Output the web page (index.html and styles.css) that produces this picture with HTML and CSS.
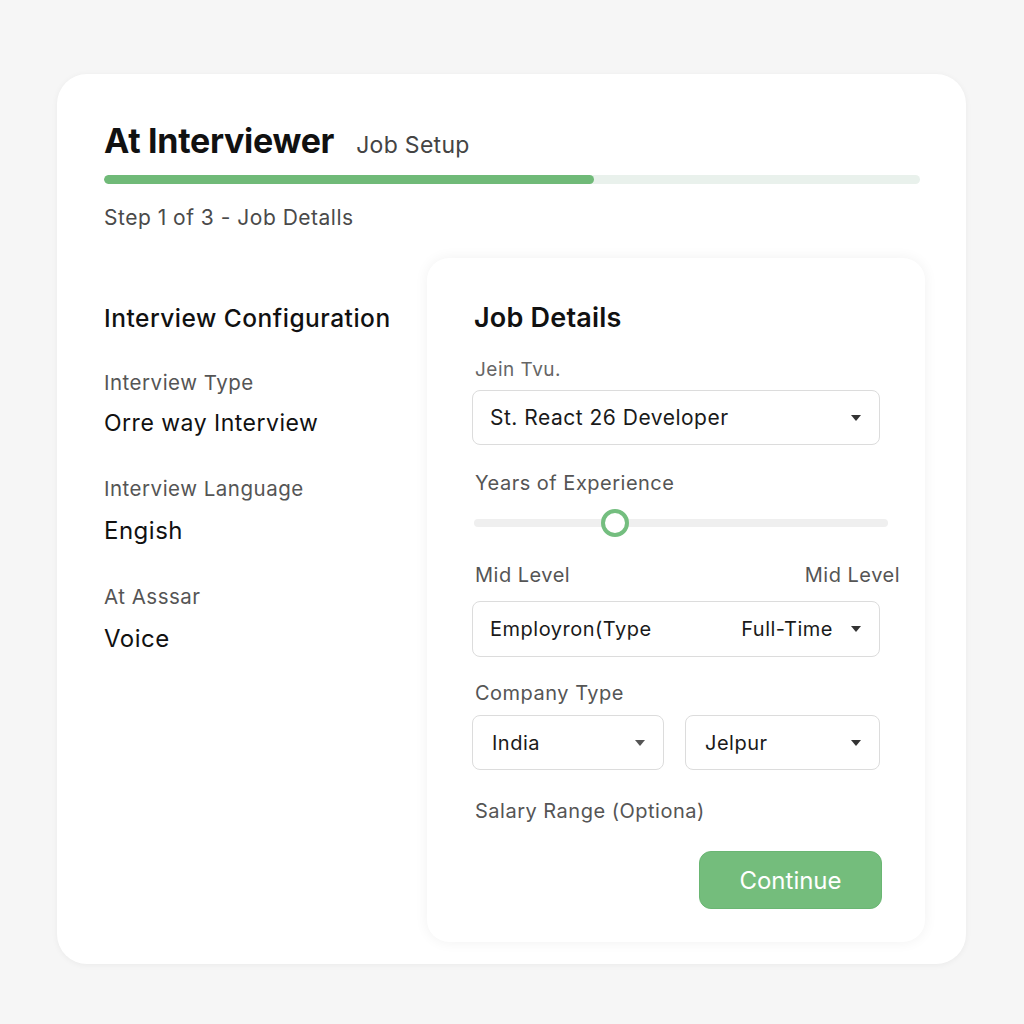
FILE: index.html
```html
<!DOCTYPE html>
<html lang="en">
<head>
<meta charset="utf-8">
<title>At Interviewer - Job Setup</title>
<link rel="stylesheet" href="styles.css">
</head>
<body>
<main class="shell">
  <header class="head">
    <div class="title-row">
      <h1 class="title">At Interviewer</h1>
      <span class="subtitle">Job Setup</span>
    </div>
    <div class="progress"><div class="progress-fill" style="width:60%"></div></div>
    <p class="step">Step 1 of 3 - Job Detalls</p>
  </header>
  <div class="content">
    <section class="config">
      <h2 class="config-title">Interview Configuration</h2>
      <div class="item">
        <div class="item-label">Interview Type</div>
        <div class="item-value">Orre way Interview</div>
      </div>
      <div class="item">
        <div class="item-label">Interview Language</div>
        <div class="item-value big">Engish</div>
      </div>
      <div class="item">
        <div class="item-label">At Asssar</div>
        <div class="item-value big">Voice</div>
      </div>
    </section>
    <section class="details">
      <h2 class="details-title">Job Details</h2>
      <label class="f-label l-job">Jein Tvu.</label>
      <div class="select s-job"><span>St. React 26 Developer</span><span class="caret"></span></div>
      <label class="f-label l-years">Years of Experience</label>
      <div class="slider"><div class="track"></div><div class="thumb"></div></div>
      <div class="levels"><span>Mid Level</span><span>Mid Level</span></div>
      <div class="select s-emp"><span>Employron(Type</span><span class="emp-right"><span>Full-Time</span><span class="caret"></span></span></div>
      <label class="f-label l-company">Company Type</label>
      <div class="pair">
        <div class="select s-half"><span>India</span><span class="caret small"></span></div>
        <div class="select s-half"><span>Jelpur</span><span class="caret"></span></div>
      </div>
      <label class="f-label l-salary">Salary Range (Optiona)</label>
      <div class="actions"><button class="btn">Continue</button></div>
    </section>
  </div>
</main>
</body>
</html>
```
FILE: styles.css
```css
* { box-sizing: border-box; }
html, body { margin: 0; padding: 0; }
body {
  background: #f6f6f6;
  font-family: Inter, "Noto Sans", "Liberation Sans", sans-serif;
  color: #141414;
  letter-spacing: 0.5px;
  width: 1024px;
  height: 1024px;
}
.shell {
  margin: 74px 0 0 57px;
  width: 909px;
  height: 890px;
  background: #fff;
  border-radius: 30px;
  box-shadow: 0 1px 6px rgba(0,0,0,0.05);
  padding: 47px 41px 22px 47px;
  display: flex;
  flex-direction: column;
}
.head { padding-right: 5px; }
.title-row { display: flex; align-items: baseline; gap: 22px; height: 40px; }
.title {
  margin: 0;
  font-size: 34px;
  font-weight: 700;
  line-height: 40px;
  letter-spacing: -0.3px;
  color: #111;
}
.subtitle { font-size: 23px; color: #444; letter-spacing: 0.3px; }
.progress {
  margin-top: 14px;
  height: 9px;
  background: #e9f1ec;
  border-radius: 5px;
  overflow: hidden;
}
.progress-fill { height: 100%; background: #70ba78; border-radius: 5px; }
.step {
  margin: 22px 0 0;
  font-size: 21px;
  line-height: 24px;
  color: #4a4a4a;
}
.content {
  margin-top: 28px;
  flex: 1;
  display: flex;
}
.config { width: 323px; padding-top: 45px; }
.config-title {
  margin: 0;
  font-size: 24.5px;
  font-weight: 500;
  line-height: 30px;
  color: #111;
}
.item { margin-top: 38px; }
.item + .item { margin-top: 41px; }
.item-label { font-size: 20.5px; line-height: 24px; color: #555; }
.item-value { margin-top: 15px; font-size: 23px; line-height: 26px; color: #111; }
.item-value.big { font-size: 24px; margin-top: 17px; }
.details {
  flex: 1;
  background: #fff;
  border-radius: 22px;
  box-shadow: 0 0 14px rgba(0,0,0,0.06);
  padding: 44px 45px 0 45px;
  display: flex;
  flex-direction: column;
}
.details-title {
  margin: 0 0 0 2px;
  font-size: 27px;
  font-weight: 600;
  line-height: 32px;
  letter-spacing: 0.2px;
  color: #111;
}
.f-label {
  display: block;
  margin-left: 3px;
  font-size: 20px;
  line-height: 24px;
  color: #555;
}
.l-job { margin-top: 24px; font-size: 19px; color: #666; }
.l-years { margin-top: 26px; }
.l-company { margin-top: 24px; }
.l-salary { margin-top: 29px; }
.select {
  height: 55px;
  border: 1px solid #dcdcdc;
  border-radius: 8px;
  background: #fff;
  display: flex;
  align-items: center;
  justify-content: space-between;
  padding: 0 18px 0 17px;
  font-size: 21px;
  color: #1a1a1a;
}
.s-job { margin-top: 8px; }
.s-emp { margin-top: 14px; height: 56px; font-size: 20px; }
.emp-right { display: flex; align-items: center; gap: 18px; }
.caret {
  width: 0; height: 0;
  border-left: 5px solid transparent;
  border-right: 5px solid transparent;
  border-top: 6px solid #333;
}
.caret.small { border-top-color: #555; }
.slider { position: relative; height: 30px; margin-top: 13px; }
.track {
  position: absolute;
  left: 2px; right: -8px; top: 11px;
  height: 8px;
  border-radius: 4px;
  background: #efefef;
}
.thumb {
  position: absolute;
  left: 129px; top: 1px;
  width: 28px; height: 28px;
  border-radius: 50%;
  border: 4px solid #74be7f;
  background: #fff;
}
.levels {
  margin: 25px -20px 0 3px;
  display: flex;
  justify-content: space-between;
  font-size: 20px;
  line-height: 24px;
  color: #555;
}
.pair { margin-top: 10px; display: flex; gap: 21px; }
.s-half { flex: 0 0 192px; font-size: 20px; padding-left: 19px; }
.s-half + .s-half { flex: 1; }
.actions { margin-top: 28px; display: flex; justify-content: flex-end; }
.btn {
  margin-right: -2px;
  width: 183px;
  height: 58px;
  border: 1px solid #6ab673;
  border-radius: 12px;
  background: #74bd7c;
  color: #fff;
  font-family: inherit;
  font-size: 24px;
  letter-spacing: 0;
}
```
